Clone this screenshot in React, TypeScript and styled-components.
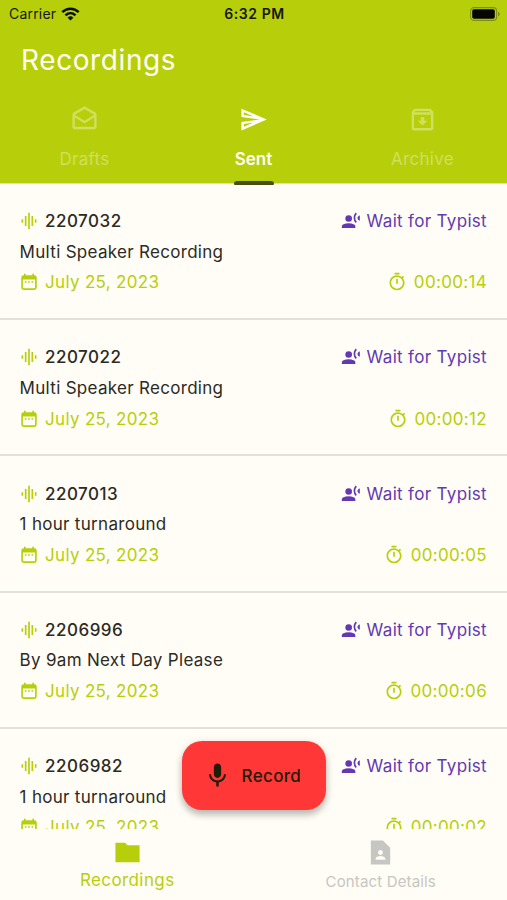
import React from "react";
import styled, { createGlobalStyle } from "styled-components";
import {
  MdGraphicEq,
  MdMic,
  MdOutlineArchive,
  MdOutlineDrafts,
  MdOutlineSend,
  MdOutlineTimer,
} from "react-icons/md";

const lime = "#b7cf0b";
const cream = "#fffdf5";
const purple = "#6239b3";

const GlobalStyle = createGlobalStyle`
  * { box-sizing: border-box; }
  body { margin: 0; background: ${cream}; }
  svg { display: block; flex-shrink: 0; }
  button { border: 0; padding: 0; background: none; font: inherit; color: inherit; }
`;

const Screen = styled.div`
  position: relative;
  display: flex;
  flex-direction: column;
  width: 507px;
  height: 900px;
  overflow: hidden;
  background: ${cream};
  color: #2b2b25;
  font-family: Inter, sans-serif;
  font-size: 17px;
  letter-spacing: 0.33px;
`;

const Header = styled.header`
  flex: none;
  height: 184px;
  background: ${lime};
  border-bottom: 1px solid #dfe3a5;
  display: flex;
  flex-direction: column;
`;

const StatusBar = styled.div`
  display: grid;
  grid-template-columns: 1fr auto 1fr;
  align-items: center;
  height: 27px;
  padding: 0 7px 0 9px;
  font-size: 14px;
  letter-spacing: 0.2px;
  color: #15180a;
`;

const Carrier = styled.div`
  display: flex;
  align-items: center;
  gap: 5px;
`;

const Clock = styled.div`
  font-weight: 600;
  letter-spacing: 0.55px;
`;

const BatterySlot = styled.div`
  display: flex;
  justify-content: flex-end;
`;

const Title = styled.h1`
  margin: 0;
  padding: 13px 0 0 21px;
  height: 73px;
  font-size: 28px;
  line-height: 40px;
  font-weight: 400;
  letter-spacing: 0.6px;
  color: ${cream};
`;

const Tabs = styled.nav`
  flex: 1;
  display: grid;
  grid-template-columns: repeat(3, 1fr);
`;

const Tab = styled.button<{ $active?: boolean }>`
  position: relative;
  display: flex;
  flex-direction: column;
  align-items: center;
  padding-top: 5px;
  gap: 13px;
  line-height: 24px;
  font-weight: ${(p) => (p.$active ? 600 : 400)};
  letter-spacing: ${(p) => (p.$active ? 0 : 0.3)}px;
  color: ${(p) => (p.$active ? cream : "#d0df5c")};
`;

const Indicator = styled.span`
  position: absolute;
  bottom: -2px;
  width: 40px;
  height: 4px;
  border-radius: 3px 3px 1px 1px;
  background: #464e12;
`;

const List = styled.main`
  flex: 1;
  min-height: 0;
  overflow: hidden;
`;

const Item = styled.article`
  display: flex;
  flex-direction: column;
  height: 136.2px;
  padding: 21.9px 20px 0 19px;
  border-bottom: 2px solid #e3e0d9;
`;

const Row = styled.div`
  display: flex;
  justify-content: space-between;
  align-items: center;
  height: 30.6px;
`;

const Note = styled.div`
  padding-left: 0.6px;
  letter-spacing: 0.3px;
`;

const Label = styled.div<{ $color?: string; $bold?: boolean; $gap?: number }>`
  display: flex;
  align-items: center;
  gap: ${(p) => p.$gap ?? 6}px;
  color: ${(p) => p.$color ?? "inherit"};
  font-weight: ${(p) => (p.$bold ? 500 : 400)};
  letter-spacing: ${(p) => (p.$bold ? 0.5 : 0.32)}px;
  white-space: nowrap;
`;

const RecordButton = styled.button`
  position: absolute;
  left: 182px;
  top: 741px;
  display: flex;
  align-items: center;
  gap: 10px;
  width: 143.5px;
  height: 69px;
  padding: 0 0 0 20.5px;
  border-radius: 20px;
  background: #ff3737;
  color: #1f1d08;
  font-weight: 500;
  letter-spacing: 0.35px;
  box-shadow: 0 5px 7px rgba(0, 0, 0, 0.23), 0 1px 8px rgba(0, 0, 0, 0.1);
`;

const BottomNav = styled.nav`
  flex: none;
  display: grid;
  grid-template-columns: 1fr 1fr;
  height: 71px;
  background: ${cream};
`;

const NavItem = styled.button<{ $active?: boolean }>`
  display: flex;
  flex-direction: column;
  align-items: center;
  padding: 9px 0 0 1px;
  gap: ${(p) => (p.$active ? 1 : 3)}px;
  line-height: 24px;
  font-size: ${(p) => (p.$active ? 17 : 15)}px;
  letter-spacing: ${(p) => (p.$active ? 0.4 : 0.15)}px;
  color: ${(p) => (p.$active ? lime : "#c7c6c2")};
`;

const WifiIcon = () => (
  <svg width="19" height="14" viewBox="0 0 19 14" fill="none" stroke="#0b0d02" strokeWidth="2.5">
    <path d="M1.3 5.2C6 .6 13 .6 17.7 5.2" />
    <path d="M4.5 8.3c2.9-2.8 7.1-2.8 10 0" />
    <path d="M9.5 13.6l2.9-2.9a4.2 4.2 0 0 0-5.8 0z" fill="#0b0d02" stroke="none" />
  </svg>
);

const BatteryIcon = () => (
  <svg width="30" height="14" viewBox="0 0 30 14">
    <rect x=".6" y=".6" width="26" height="12.8" rx="3.5" fill="none" stroke="#7d8d10" strokeWidth="1.1" />
    <rect x="2.2" y="2.3" width="22.6" height="9.4" rx="1.8" fill="#050600" />
    <path d="M28 4.7c2.2.8 2.2 3.8 0 4.6z" fill="#7d8d10" />
  </svg>
);

const CalendarIcon = () => (
  <svg width="20" height="20" viewBox="0 0 24 24" fill="currentColor">
    <path
      fillRule="evenodd"
      d="M6 2.8a1 1 0 0 1 2 0V4h8V2.8a1 1 0 0 1 2 0V4h.5A2.8 2.8 0 0 1 21.3 6.8V18.7a2.8 2.8 0 0 1-2.8 2.800H5.500a2.800 2.800 0 0 1-2.800-2.800V6.800A2.800 2.800 0 0 1 5.500 4H6zM4.700 9v9.500a1 1 0 0 0 1 1h12.600a1 1 0 0 0 1-1V9z"
    />
    <path d="M7 11h2v2H7zM11 11h2v2h-2zM15 11h2v2h-2z" />
  </svg>
);

const TypistIcon = () => (
  <svg width="20" height="20" viewBox="0 0 24 24" fill="currentColor">
    <circle cx="9.2" cy="9" r="4" />
    <path d="M1 20.500v-1.700c0-1.100.6-2 1.500-2.500 4.200-2.100 9-2.100 13.200 0 .9.500 1.500 1.400 1.500 2.500v1.700z" />
    <path d="M18.300 2.500c-3 3.200-3 8 0 11.200" fill="none" stroke="currentColor" strokeWidth="2" />
    <path d="M22.600 5.500c-3.700.5-3.700 5.600 0 6.100z" />
  </svg>
);

const FolderIcon = () => (
  <svg width="29" height="29" viewBox="0 0 24 24" fill="currentColor">
    <path d="M12 6l-2-2H2v16h20V6H12z" />
  </svg>
);

const ContactIcon = () => (
  <svg width="29" height="29" viewBox="0 0 24 24" fill="currentColor">
    <path d="M14 2H4v20h16V8l-6-6zm-2 8c1.1 0 2 .9 2 2s-.9 2-2 2-2-.9-2-2 .9-2 2-2zm4 8H8v-.57c0-.81.48-1.53 1.22-1.85a6.95 6.95 0 0 1 5.56 0A2.01 2.01 0 0 1 16 17.43V18z" />
  </svg>
);

const recordings = [
  { id: "2207032", note: "Multi Speaker Recording", time: "00:00:14" },
  { id: "2207022", note: "Multi Speaker Recording", time: "00:00:12" },
  { id: "2207013", note: "1 hour turnaround", time: "00:00:05" },
  { id: "2206996", note: "By 9am Next Day Please", time: "00:00:06" },
  { id: "2206982", note: "1 hour turnaround", time: "00:00:02" },
];

export default function App() {
  return (
    <>
      <GlobalStyle />
      <Screen>
        <Header>
          <StatusBar>
            <Carrier>Carrier <WifiIcon /></Carrier>
            <Clock>6:32 PM</Clock>
            <BatterySlot><BatteryIcon /></BatterySlot>
          </StatusBar>
          <Title>Recordings</Title>
          <Tabs>
            <Tab><MdOutlineDrafts size={29} />Drafts</Tab>
            <Tab $active><MdOutlineSend size={29} />Sent<Indicator /></Tab>
            <Tab><MdOutlineArchive size={29} />Archive</Tab>
          </Tabs>
        </Header>
        <List>
          {recordings.map((r) => (
            <Item key={r.id}>
              <Row>
                <Label $bold><MdGraphicEq size={20} color={lime} />{r.id}</Label>
                <Label $color={purple}><TypistIcon />Wait for Typist</Label>
              </Row>
              <Row><Note>{r.note}</Note></Row>
              <Row>
                <Label $color={lime}><CalendarIcon />July 25, 2023</Label>
                <Label $color={lime} $gap={6.5}><MdOutlineTimer size={20} />{r.time}</Label>
              </Row>
            </Item>
          ))}
        </List>
        <BottomNav>
          <NavItem $active><FolderIcon />Recordings</NavItem>
          <NavItem><ContactIcon />Contact Details</NavItem>
        </BottomNav>
        <RecordButton><MdMic size={29} />Record</RecordButton>
      </Screen>
    </>
  );
}
